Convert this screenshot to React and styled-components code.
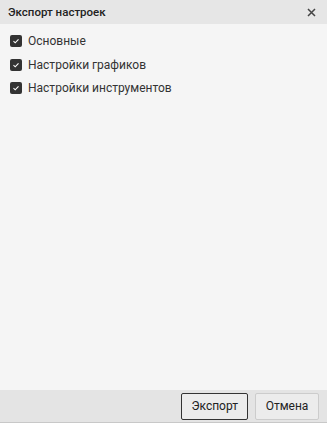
import styled, {createGlobalStyle} from "styled-components";

const GlobalStyle = createGlobalStyle`
  html, body {
    margin: 0;
    padding: 0;
    height: 100%;
  }
  #root {
    height: 100%;
  }
  body {
    font-family: Roboto, "Liberation Sans", sans-serif;
    color: #333;
  }
`;

const Dialog = styled.div`
  display: flex;
  flex-direction: column;
  width: 327px;
  height: 423px;
  background: #f5f5f5;
  box-sizing: border-box;
  border-bottom: 1px solid #c8c8c8;
`;

const Header = styled.div`
  display: flex;
  align-items: center;
  justify-content: space-between;
  height: 24px;
  padding: 0 8px 0 8px;
  background: #e6e6e6;
  font-size: 11.5px;
  font-weight: 500;
  color: #222;
`;

const CloseButton = styled.button`
  display: flex;
  align-items: center;
  justify-content: center;
  width: 16px;
  height: 16px;
  padding: 0;
  border: none;
  background: none;
  color: #333;
  cursor: pointer;
`;

const Body = styled.div`
  flex: 1;
  display: flex;
  flex-direction: column;
  gap: 7.5px;
  padding: 9px 10px 0;
`;

const Row = styled.label`
  display: flex;
  align-items: center;
  gap: 6px;
  height: 16px;
  font-size: 12px;
  color: #333;
`;

const Box = styled.span`
  display: flex;
  align-items: center;
  justify-content: center;
  width: 12px;
  height: 12px;
  border-radius: 2px;
  background: ${p => (p.checked ? "#333" : "#fff")};
  border: ${p => (p.checked ? "none" : "1px solid #999")};
`;

const Footer = styled.div`
  display: flex;
  justify-content: flex-end;
  align-items: center;
  gap: 7px;
  height: 32px;
  padding: 0 8px 0 0;
  background: #e4e4e4;
`;

const Button = styled.button`
  height: 27px;
  padding: 0 9px;
  min-width: 64px;
  border-radius: 2px;
  border: 1px solid ${p => (p.primary ? "#333" : "#ccc")};
  background: #ececec;
  font-family: Roboto, "Liberation Sans", sans-serif;
  font-size: 12px;
  color: #222;
  cursor: pointer;
`;

const Check = ({checked}) => (
    <Box checked={checked}>
        {checked && (
            <svg width="8" height="8" viewBox="0 0 8 8">
                <path d="M1.5 4.2 L3.2 5.8 L6.5 2.3" fill="none" stroke="#fff" strokeWidth="1.1"/>
            </svg>
        )}
    </Box>
);

const options = ["Основные", "Настройки графиков", "Настройки инструментов"];

const App = () => {
    return (
        <Dialog>
            <GlobalStyle/>
            <Header>
                <span>Экспорт настроек</span>
                <CloseButton>
                    <svg width="9" height="9" viewBox="0 0 9 9">
                        <path d="M1 1 L8 8 M8 1 L1 8" stroke="#444" strokeWidth="1.5"/>
                    </svg>
                </CloseButton>
            </Header>
            <Body>
                {options.map(o => (
                    <Row key={o}>
                        <Check checked/>
                        {o}
                    </Row>
                ))}
            </Body>
            <Footer>
                <Button primary>Экспорт</Button>
                <Button>Отмена</Button>
            </Footer>
        </Dialog>
    );
};

export default App;
